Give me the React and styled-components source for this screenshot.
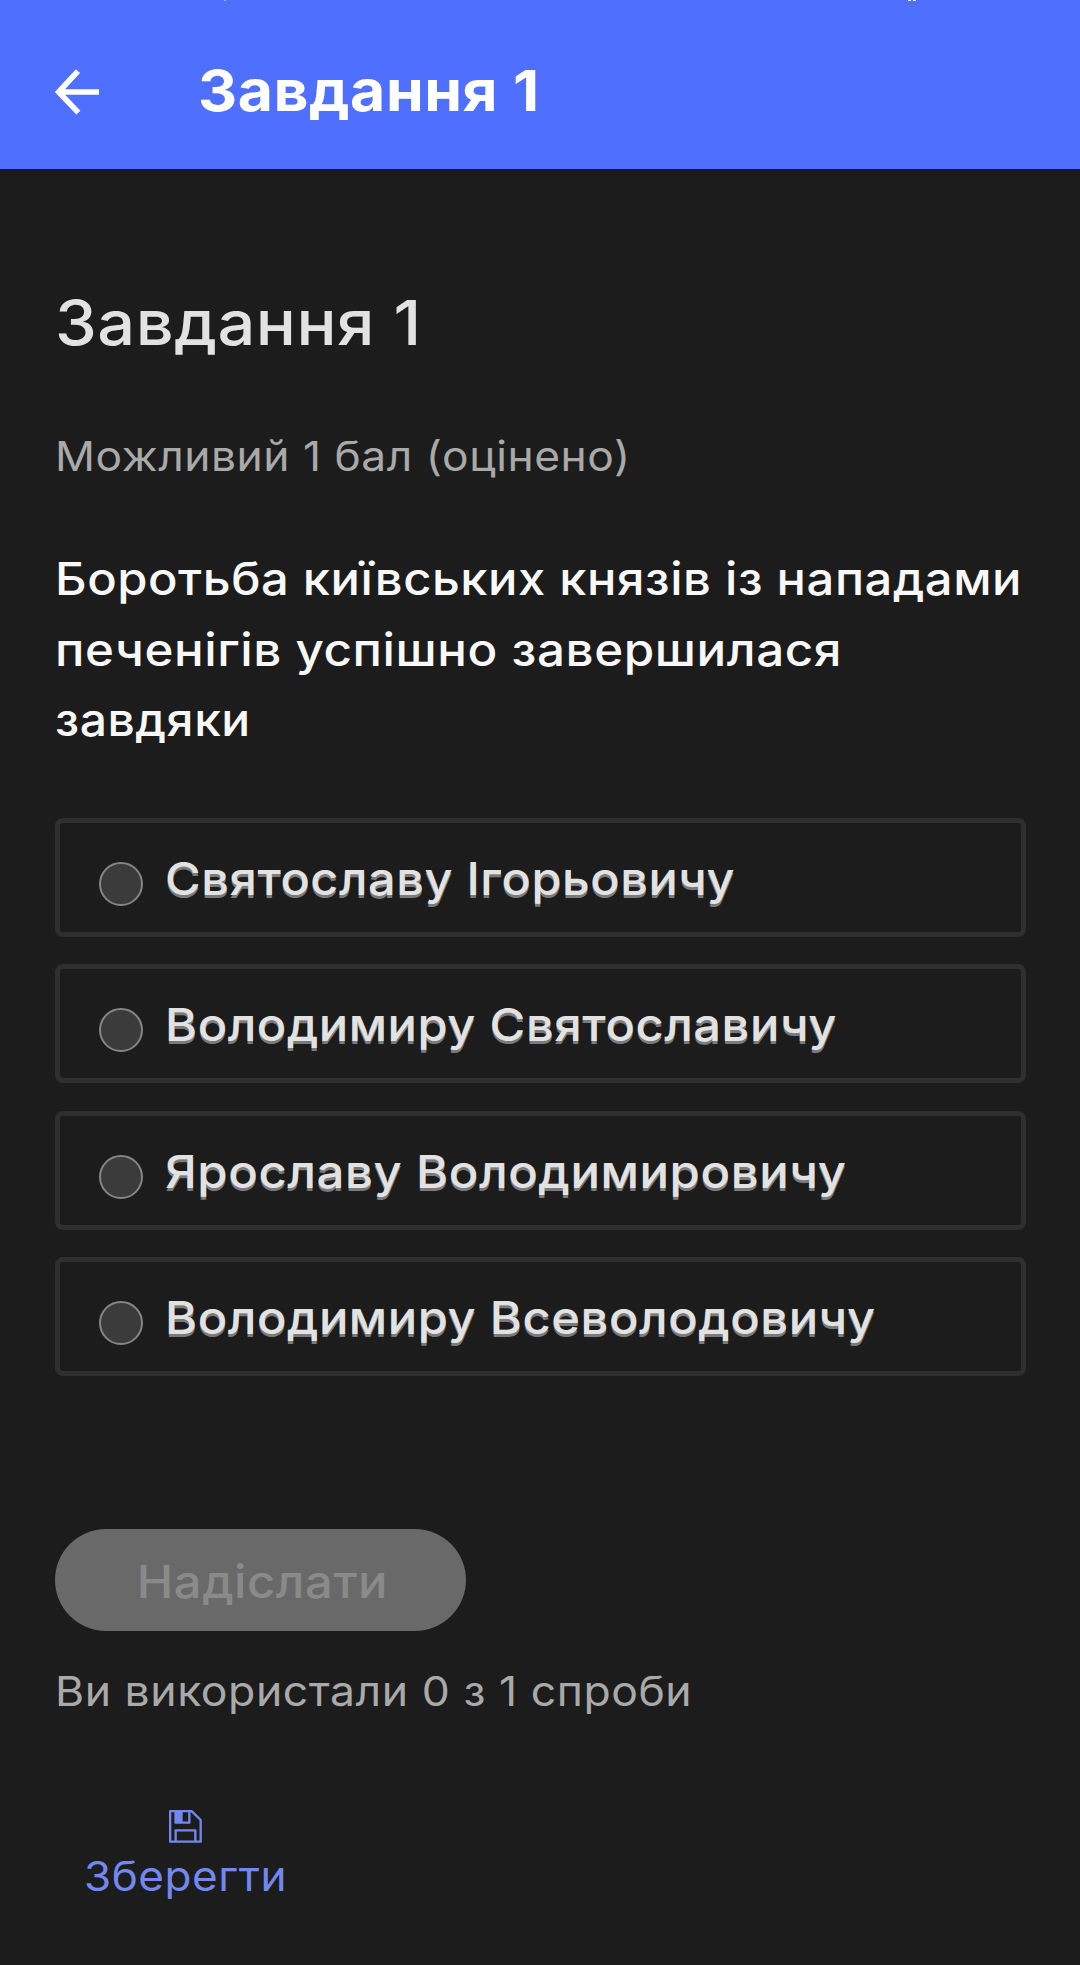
import React, { useState } from 'react';
import styled, { createGlobalStyle } from 'styled-components';

const GlobalStyle = createGlobalStyle`
    * {
        box-sizing: border-box;
    }
    body {
        margin: 0;
        background: #1c1c1c;
        font-family: Inter, "Noto Sans", sans-serif;
    }
`;

const question = [
    { text: 'Боротьба київських князів із нападами', stretch: 1.087 },
    { text: 'печенігів успішно завершилася', stretch: 1.097 },
    { text: 'завдяки', stretch: 1.067 },
];

const answers = [
    { text: 'Святославу Ігорьовичу', stretch: 1.082 },
    { text: 'Володимиру Святославичу', stretch: 1.086 },
    { text: 'Ярославу Володимировичу', stretch: 1.091 },
    { text: 'Володимиру Всеволодовичу', stretch: 1.087 },
];

function BackIcon() {
    return (
        <svg width="44" height="46" viewBox="0 0 44 46" fill="none" stroke="#fff" strokeWidth="5.6">
            <path d="M23 2.2 3.6 23 23.4 43.6M4 23h40" />
        </svg>
    );
}

function SaveIcon() {
    return (
        <svg width="33" height="33" viewBox="0 0 99 99" fill="none" stroke="#7288ee" strokeWidth="7">
            <path d="M3.5 3.5H68L95 30V95H3.5Z" strokeLinejoin="round" />
            <path d="M20 3V38H61V3" strokeLinejoin="round" />
            <path d="M17 3H41V38H17Z" fill="#7288ee" stroke="none" />
            <path d="M20 95V61H79V95" strokeLinejoin="round" />
        </svg>
    );
}

function App() {
    const [selected, setSelected] = useState(null);

    return (
        <Page>
            <GlobalStyle />
            <Header>
                <StatusDots viewBox="0 0 1080 2">
                    <path d="M908 .5h3m2 0h3" stroke="#e6ecff" />
                    <path d="M224 .5h2" stroke="#9db0ff" />
                </StatusDots>
                <BackIcon />
                <HeaderTitle>
                    <Wide $stretch={1.065}>Завдання 1</Wide>
                </HeaderTitle>
            </Header>
            <Content>
                <Heading>
                    <Wide $stretch={1.075}>Завдання 1</Wide>
                </Heading>
                <Note>
                    <Wide $stretch={1.081}>Можливий 1 бал (оцінено)</Wide>
                </Note>
                <Question>
                    {question.map((line) => (
                        <div key={line.text}>
                            <Wide $stretch={line.stretch}>{line.text}</Wide>
                        </div>
                    ))}
                </Question>
                <Answers>
                    {answers.map((answer, i) => (
                        <Answer key={answer.text} onClick={() => setSelected(i)}>
                            <Radio $checked={selected === i} />
                            <AnswerText $stretch={answer.stretch}>{answer.text}</AnswerText>
                        </Answer>
                    ))}
                </Answers>
                <Submit disabled={selected === null}>
                    <Wide $stretch={1.089} $origin="center">Надіслати</Wide>
                </Submit>
                <Attempts>
                    <Wide $stretch={1.086}>Ви використали 0 з 1 спроби</Wide>
                </Attempts>
                <Save>
                    <SaveIcon />
                    <Wide $stretch={1.074} $origin="center">Зберегти</Wide>
                </Save>
            </Content>
        </Page>
    );
}

const Page = styled.div`
    width: 1080px;
    height: 1965px;
    overflow: hidden;
    background: #1c1c1c;
    white-space: nowrap;
`;

/* the interface typeface is wider than Inter */
const Wide = styled.span`
    display: inline-block;
    letter-spacing: 0.5px;
    transform: scaleX(${(p) => p.$stretch});
    transform-origin: ${(p) => p.$origin || 'left'};
`;

const Header = styled.header`
    position: relative;
    display: flex;
    align-items: center;
    height: 169px;
    padding: 14px 55px 0;
    background: #4f6fff;
    box-shadow: 0 3px 0 #16172f;
`;

/* bottom edge of the system status bar */
const StatusDots = styled.svg`
    position: absolute;
    top: 0;
    left: 0;
    width: 1080px;
    height: 2px;
`;

const HeaderTitle = styled.div`
    margin-left: 99px;
    padding-bottom: 2px;
    color: #fff;
    font-size: 57px;
    font-weight: 700;
`;

const Content = styled.main`
    display: flex;
    flex-direction: column;
    align-items: flex-start;
    padding: 116px 54px 0 55px;
`;

const Heading = styled.h1`
    margin: 0;
    color: #e2e2e2;
    font-size: 62px;
    font-weight: 500;
    line-height: 76px;
`;

const Note = styled.div`
    margin-top: 70px;
    color: #a9a9a9;
    font-size: 41px;
    line-height: 50px;
`;

const Question = styled.div`
    margin-top: 63px;
    color: #f8f8f8;
    font-size: 45px;
    font-weight: 500;
    line-height: 70.5px;
`;

const Answers = styled.div`
    display: grid;
    gap: 27.33px;
    width: 100%;
    margin-top: 62.5px;
`;

const Answer = styled.div`
    display: flex;
    align-items: center;
    height: 119px;
    padding-left: 39px;
    border: 5px solid #2f2f2f;
    border-radius: 8px;
    cursor: pointer;
`;

const Radio = styled.span`
    width: 44px;
    height: 44px;
    margin-top: 13px;
    border: 2.5px solid #858585;
    border-radius: 50%;
    background: ${(p) => (p.$checked ? '#7288ee' : '#3b3b3b')};
`;

const AnswerText = styled(Wide)`
    margin: 2px 0 0 22px;
    color: #e2e2e2;
    font-size: 45px;
    font-weight: 500;
    text-shadow: 0 3px 0 #7a7a7a;
`;

const Submit = styled.button`
    width: 411px;
    height: 102px;
    margin-top: 153px;
    padding: 3px 0 0 3px;
    border: none;
    border-radius: 51px;
    background: #696969;
    color: #8a8a8a;
    font-family: inherit;
    font-size: 45px;
    font-weight: 500;
`;

const Attempts = styled.div`
    margin-top: 35px;
    color: #a9a9a9;
    font-size: 41px;
    line-height: 50px;
`;

const Save = styled.div`
    display: flex;
    flex-direction: column;
    align-items: center;
    gap: 8px;
    width: 203px;
    margin: 94px 0 0 29px;
    color: #7288ee;
    font-size: 41px;
    line-height: 50px;
`;

export default App;
